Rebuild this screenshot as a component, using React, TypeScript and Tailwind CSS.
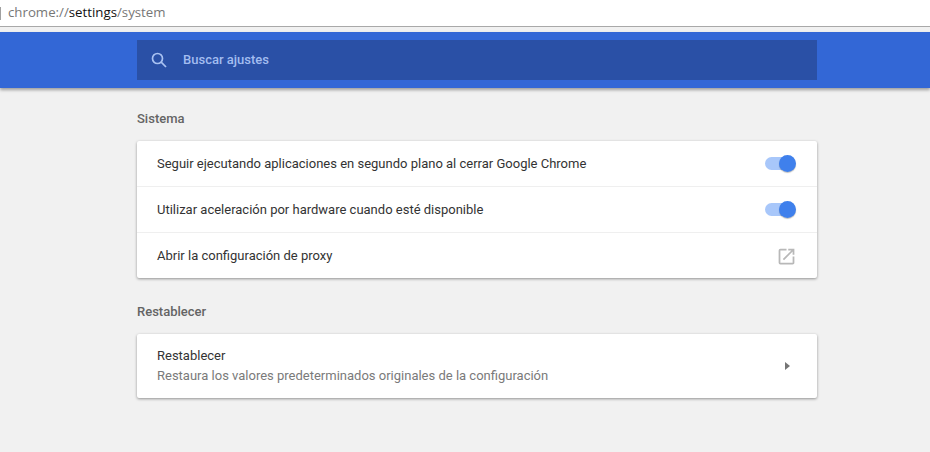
function ExternalIcon() {
  return (
    <svg width="21" height="21" viewBox="0 0 24 24" fill="#b8b8b8">
      <path d="M19 19H5V5h7V3H5a2 2 0 0 0-2 2v14a2 2 0 0 0 2 2h14c1.1 0 2-.9 2-2v-7h-2v7zM14 3v2h3.59l-9.83 9.83 1.41 1.41L19 6.41V10h2V3h-7z" />
    </svg>
  );
}

function Toggle() {
  return (
    <div className="relative w-[31px] h-[17px]">
      <div className="absolute left-0 top-[2px] w-[28px] h-[13px] rounded-full bg-[#a8c7fa]" />
      <div className="absolute right-0 top-0 w-[17px] h-[17px] rounded-full bg-[#3f80ec] shadow-[0_1px_1px_rgba(0,0,0,0.25)]" />
    </div>
  );
}

function Row({ label, children, height, border }: { label: string; children: React.ReactNode; height: string; border?: boolean }) {
  return (
    <div className={`${height} flex items-center justify-between pl-5 pr-[21px] ${border ? "border-b border-[#efefef]" : ""}`}>
      <span className="text-[13px] text-[#333333]">{label}</span>
      {children}
    </div>
  );
}

export default function App() {
  return (
    <div className="w-[930px] h-[452px] overflow-hidden bg-[#f1f1f1] font-['Roboto',sans-serif]">
      <div className="h-[27px] bg-white border-b border-[#a9a9a9] flex items-center text-[13.25px] text-[#777777] font-['Open_Sans',sans-serif]">
        <div className="w-px h-[13px] bg-[#a0a0a0] mr-[7px]" />
        <span>chrome://</span>
        <span className="text-[#111111]">settings</span>
        <span>/system</span>
      </div>

      <div className="mt-[5px] h-[56px] bg-[#3367d6] shadow-[0_2px_3px_rgba(0,0,0,0.35)] pt-[8px]">
        <div className="ml-[137px] w-[680px] h-[40px] bg-[#2a50a6] flex items-center pl-[13px] gap-[15px]">
          <svg width="18" height="18" viewBox="0 0 18 18" fill="none" stroke="#a9c2f2" strokeWidth="1.7">
            <circle cx="7.5" cy="7.5" r="5" />
            <path d="M11.2 11.2 16 16" />
          </svg>
          <span className="text-[13px] font-medium text-[#a3bdf0]">Buscar ajustes</span>
        </div>
      </div>

      <div className="ml-[137px] w-[680px]">
        <h2 className="mt-[23px] h-[15px] leading-[15px] text-[13px] font-medium text-[#646464]">Sistema</h2>
        <div className="mt-[15px] bg-white rounded-[2px] shadow-[0_1px_3px_rgba(0,0,0,0.4)]">
          <Row height="h-[46px]" label="Seguir ejecutando aplicaciones en segundo plano al cerrar Google Chrome" border>
            <Toggle />
          </Row>
          <Row height="h-[46px]" label="Utilizar aceleración por hardware cuando esté disponible" border>
            <Toggle />
          </Row>
          <Row height="h-[45px]" label="Abrir la configuración de proxy">
            <div className="mr-[-1px] mt-[1px]">
              <ExternalIcon />
            </div>
          </Row>
        </div>

        <h2 className="mt-[26px] h-[15px] leading-[15px] text-[13px] font-medium text-[#646464]">Restablecer</h2>
        <div className="mt-[15px] h-[64px] bg-white rounded-[2px] shadow-[0_1px_3px_rgba(0,0,0,0.4)] flex items-center justify-between pl-5 pr-[27px]">
          <div className="flex flex-col gap-[3px] mt-[-2px]">
            <span className="text-[13px] leading-[17px] text-[#333333]">Restablecer</span>
            <span className="text-[13px] leading-[17px] text-[#7a7a7a]">Restaura los valores predeterminados originales de la configuración</span>
          </div>
          <div className="w-0 h-0 border-y-[4px] border-y-transparent border-l-[5px] border-l-[#757575]" />
        </div>
      </div>
    </div>
  );
}
